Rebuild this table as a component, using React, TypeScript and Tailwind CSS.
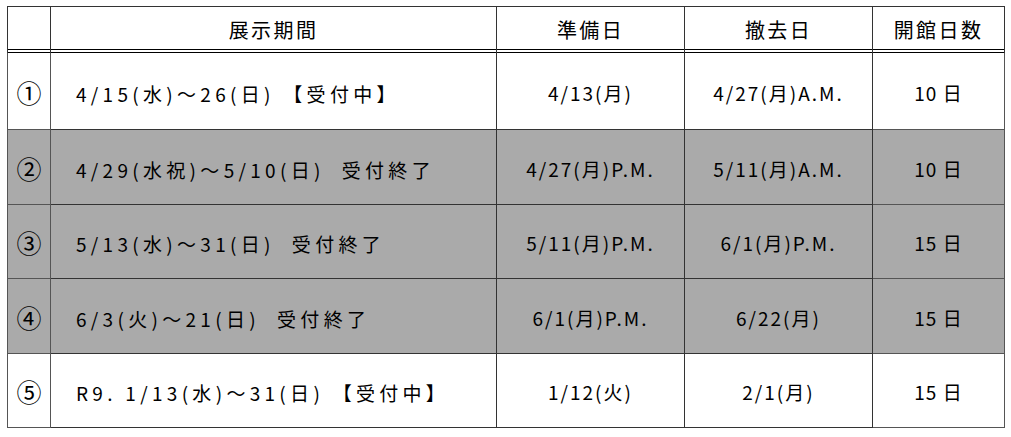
import React from "react";

interface Row {
  no: string;
  period: string;
  prep: string;
  removal: string;
  days: string;
  closed: boolean;
  h: string;
}

const ROWS: Row[] = [
  { no: "①", period: "4/15(水)～26(日) 【受付中】", prep: "4/13(月)", removal: "4/27(月)A.M.", days: "10 日", closed: false, h: "h-[77px]" },
  { no: "②", period: "4/29(水祝)～5/10(日)  受付終了", prep: "4/27(月)P.M.", removal: "5/11(月)A.M.", days: "10 日", closed: true, h: "h-[75px]" },
  { no: "③", period: "5/13(水)～31(日)  受付終了", prep: "5/11(月)P.M.", removal: "6/1(月)P.M.", days: "15 日", closed: true, h: "h-[74px]" },
  { no: "④", period: "6/3(火)～21(日)  受付終了", prep: "6/1(月)P.M.", removal: "6/22(月)", days: "15 日", closed: true, h: "h-[75px]" },
  { no: "⑤", period: "R9. 1/13(水)～31(日) 【受付中】", prep: "1/12(火)", removal: "2/1(月)", days: "15 日", closed: false, h: "h-[74px]" },
];

const font = { fontFamily: '"Noto Sans CJK JP", "Noto Sans", sans-serif' };

// header cells: double rule at the bottom (1px line, 2px gap, then the row's top border)
const th = "border border-[#333] border-b-0 font-normal shadow-[inset_0_-2px_0_#fff,inset_0_-3px_0_#000]";

const App = () => {
  return (
    <div className="w-[1011px] h-[437px] bg-white pt-[6px] pl-[7px] text-black" style={font}>
      <table className="table-fixed border-collapse w-[997px] border border-[#777]">
        <colgroup>
          <col className="w-[43px]" />
          <col className="w-[446px]" />
          <col className="w-[188px]" />
          <col className="w-[188px]" />
          <col className="w-[132px]" />
        </colgroup>
        <thead>
          <tr className="h-[46px] text-[20px] tracking-[0.12em]">
            <th className={th}></th>
            <th className={th}>展示期間</th>
            <th className={th}>準備日</th>
            <th className={th}>撤去日</th>
            <th className={th}>開館日数</th>
          </tr>
        </thead>
        <tbody>
          {ROWS.map((r, i) => (
            <tr key={r.no} className={`${r.h} ${r.closed ? "bg-[#aaaaaa]" : "bg-white"}`}>
              <td className={`border border-[#555] text-center text-[25px] leading-none pt-[2px] ${i === 0 ? "border-t-black" : ""}`}>{r.no}</td>
              <td className={`border border-[#333] pl-[25px] pt-[6px] text-[19px] tracking-[4.3px] whitespace-pre ${i === 0 ? "border-t-black" : ""}`}>{r.period}</td>
              <td className={`border border-[#333] text-center pt-[4px] text-[19px] tracking-[2px] ${i === 0 ? "border-t-black" : ""}`}>{r.prep}</td>
              <td className={`border border-[#333] text-center pt-[4px] text-[19px] tracking-[2px] ${i === 0 ? "border-t-black" : ""}`}>{r.removal}</td>
              <td className={`border border-[#555] text-center pt-[4px] text-[19px] tracking-[1px] whitespace-pre ${i === 0 ? "border-t-black" : ""}`}>{r.days}</td>
            </tr>
          ))}
        </tbody>
      </table>
    </div>
  );
};

export default App;
